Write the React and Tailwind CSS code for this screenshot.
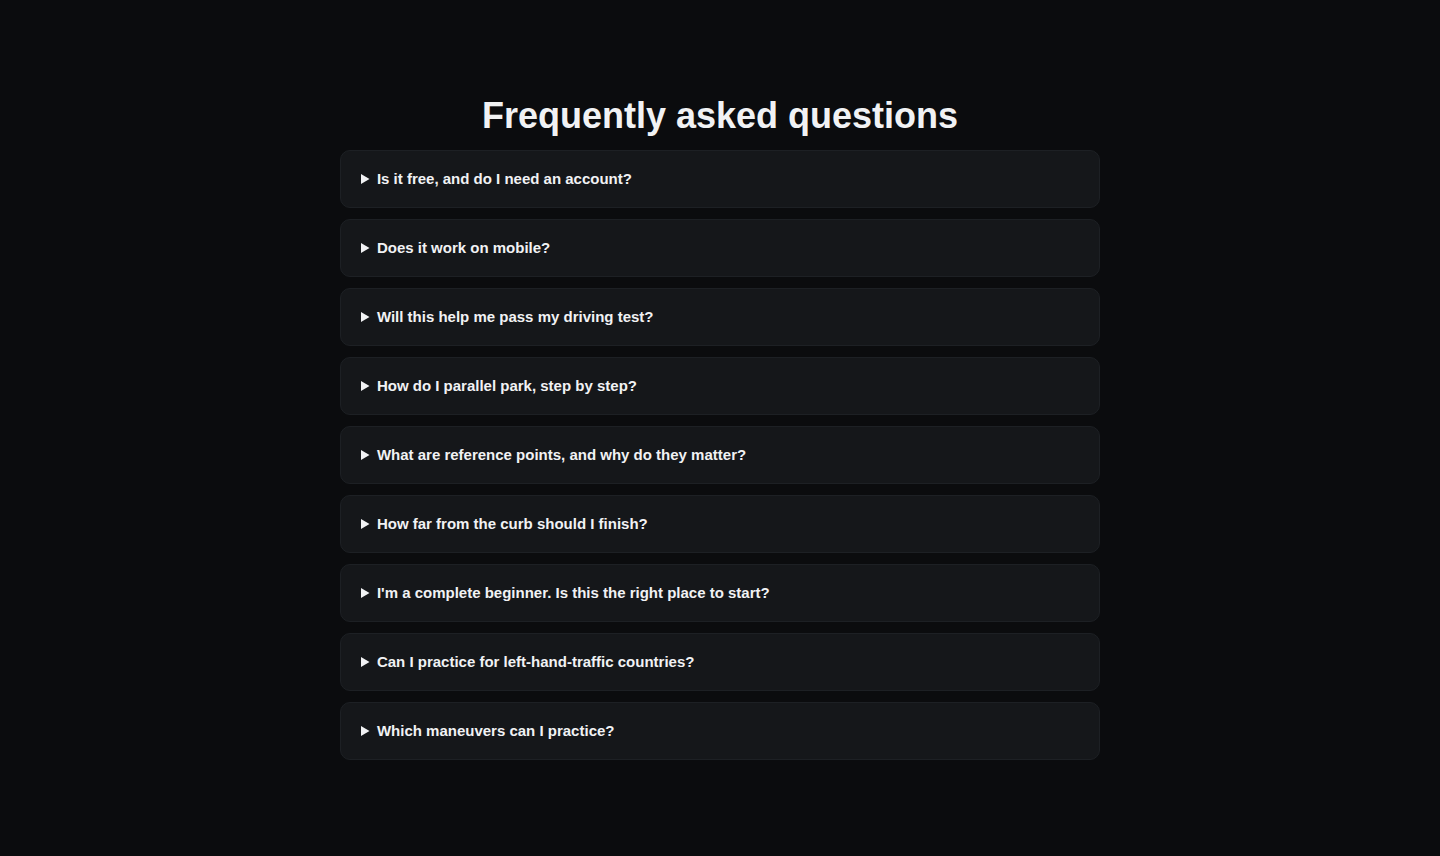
const questions = [
  'Is it free, and do I need an account?',
  'Does it work on mobile?',
  'Will this help me pass my driving test?',
  'How do I parallel park, step by step?',
  'What are reference points, and why do they matter?',
  'How far from the curb should I finish?',
  "I'm a complete beginner. Is this the right place to start?",
  'Can I practice for left-hand-traffic countries?',
  'Which maneuvers can I practice?',
];

export default function App() {
  return (
    <div className="min-h-screen bg-[#0b0c0e] text-[#f1f2f4] font-['Liberation_Sans',Arial,sans-serif]">
      <div className="mx-auto w-[760px] pt-[94px] pb-16">
        <h1 className="text-center text-[36px] leading-[44px] font-bold mb-[12px]">
          Frequently asked questions
        </h1>
        <div className="flex flex-col gap-[11px]">
          {questions.map((q, i) => (
            <details
              key={i}
              className="rounded-[10px] border border-[#1d2024] bg-[#15171a]"
            >
              <summary className="cursor-pointer px-5 py-[17px] text-[15px] leading-[22px] font-bold">
                {q}
              </summary>
              <div className="px-5 pb-4 text-sm text-gray-400">
                Answer coming soon.
              </div>
            </details>
          ))}
        </div>
      </div>
    </div>
  );
}
